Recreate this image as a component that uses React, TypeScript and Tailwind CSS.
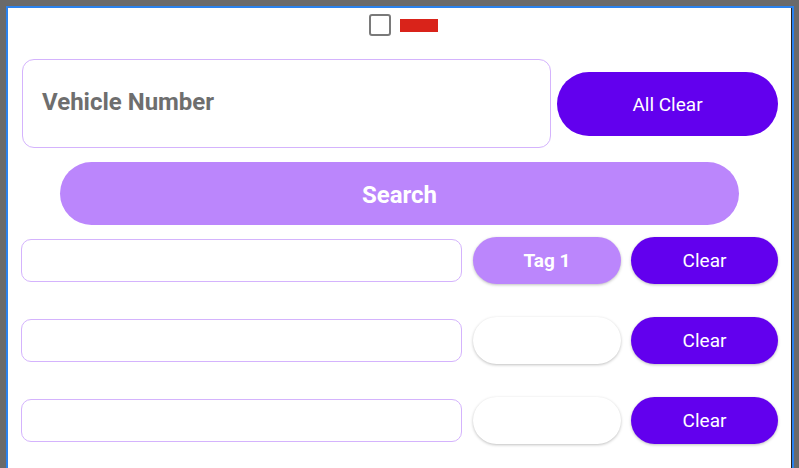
const rows = [{ tag: "Tag 1" }, { tag: "" }, { tag: "" }];

function TagRow({ tag }: { tag: string }) {
  return (
    <div className="flex h-[47px] items-center">
      <input className="ml-[13px] h-[43px] w-[441px] rounded-[10px] border border-[#d4b3fd] bg-white outline-none" />
      <button
        className={
          tag
            ? "ml-[11px] h-[47px] w-[148px] rounded-full bg-[#bb86fc] pt-[2px] text-[19px] font-bold text-white shadow-[0_1px_3px_rgba(0,0,0,0.25)]"
            : "ml-[11px] h-[47px] w-[148px] rounded-full bg-white shadow-[0_1px_3px_rgba(0,0,0,0.25)]"
        }
      >
        {tag}
      </button>
      <button className="ml-[10px] h-[47px] w-[147px] rounded-full bg-[#6200ee] pt-[2px] text-[19px] text-white shadow-[0_1px_3px_rgba(0,0,0,0.25)]">
        Clear
      </button>
    </div>
  );
}

export default function App() {
  return (
    <div className="h-[468px] w-[799px] overflow-hidden bg-[#6a6a6a] pl-[6px] pr-[5px] pt-[6px] font-['Roboto',sans-serif]">
      <div className="h-full border-x-2 border-t-2 border-[#2a82ee] bg-white">
        <div className="flex h-full flex-col border-r border-[#222]">
          {/* top checkbox and status */}
          <div className="flex items-center justify-center gap-[9px] pl-[8px] pt-[6px]">
            <div className="h-[22px] w-[22px] rounded-[3px] border-2 border-[#7a7a7a]" />
            <div className="h-[13px] w-[38px] bg-[#d9231a]" />
          </div>

          <div className="mt-[23px] flex items-center">
            <div className="ml-[14px] flex h-[89px] w-[529px] items-center rounded-[12px] border border-[#d4b3fd] pb-[3px] pl-[19px]">
              <span className="text-[24px] font-bold text-[#6e6e6e]">Vehicle Number</span>
            </div>
            <button className="ml-[6px] h-[64px] w-[221px] rounded-full bg-[#6200ee] pt-[3px] text-[19px] text-white">
              All Clear
            </button>
          </div>

          <button className="mx-[52px] mt-[14px] h-[63px] rounded-full bg-[#bb86fc] pt-[3px] text-[24px] font-bold text-white">
            Search
          </button>

          <div className="mt-[12px] flex flex-col gap-[33px]">
            {rows.map((r, i) => (
              <TagRow key={i} tag={r.tag} />
            ))}
          </div>
        </div>
      </div>
    </div>
  );
}
